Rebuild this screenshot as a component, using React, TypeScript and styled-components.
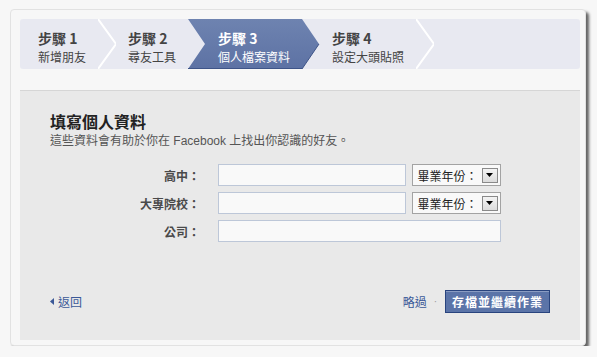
import { FC, Fragment } from 'react'
import styled, { createGlobalStyle } from 'styled-components'

const GlobalStyle = createGlobalStyle`
  html, body {
    margin: 0;
    padding: 0;
    background: #f7f7f7;
  }
  body {
    font-family: 'Liberation Sans', 'Noto Sans CJK TC', sans-serif;
    font-size: 12px;
    color: #333;
  }
`

const steps = [
  { n: 1, label: '新增朋友' },
  { n: 2, label: '尋友工具' },
  { n: 3, label: '個人檔案資料' },
  { n: 4, label: '設定大頭貼照' }
]
const ACTIVE = 3

const Card = styled.div`
  box-sizing: border-box;
  margin: 9px 0 0 10px;
  width: 576px;
  height: 337px;
  padding: 9px 5px 5px 9px;
  background: #f7f7f7;
  border: 1px solid #e2e2e2;
  border-radius: 4px;
  box-shadow: 3px 3px 3px rgba(0, 0, 0, 0.6);
  display: flex;
  flex-direction: column;
`

const StepBar = styled.div`
  display: flex;
  height: 50px;
  width: 560px;
  background: #e8e9f1;
  border-radius: 3px;
`

const Step = styled.div<{ $active?: boolean; $first?: boolean }>`
  box-sizing: border-box;
  display: flex;
  flex-direction: column;
  padding: 9px 12px 0 ${(p) => (p.$first ? 18 : 12)}px;
  color: ${(p) => (p.$active ? '#fff' : '#444')};
  background: ${(p) =>
    p.$active ? 'linear-gradient(#6e83b0, #5d72a4)' : 'transparent'};
  box-shadow: ${(p) => (p.$active ? 'inset 0 -1px 0 #3e5488' : 'none')};
  white-space: nowrap;
`

const StepTitle = styled.div`
  font-weight: bold;
  font-size: 14px;
  line-height: 20px;
  font-family: 'Noto Sans CJK TC', sans-serif;
`

const StepLabel = styled.div`
  font-size: 12px;
  line-height: 17px;
  font-family: 'Noto Sans CJK TC', sans-serif;
`

const Sep: FC<{ kind: 'plain' | 'into' | 'out'; id: string }> = ({ kind, id }) => (
  <svg width="18" height="50" viewBox="0 0 18 50" style={{ flex: 'none' }}>
    <defs>
      <linearGradient id={id} x1="0" y1="0" x2="0" y2="1">
        <stop offset="0" stopColor="#6e83b0" />
        <stop offset="1" stopColor="#5d72a4" />
      </linearGradient>
    </defs>
    {kind === 'plain' && (
      <polyline points="0,0 18,25 0,50" fill="none" stroke="#fff" strokeWidth="2" />
    )}
    {kind === 'into' && (
      <>
        <polygon points="0,0 18,0 18,50 0,50 17,25" fill={`url(#${id})`} />
        <line x1="0" y1="49.5" x2="18" y2="49.5" stroke="#3e5488" />
      </>
    )}
    {kind === 'out' && (
      <>
        <polygon points="0,0 17,25 0,50" fill={`url(#${id})`} />
        <polyline points="0,50 17,25" fill="none" stroke="#3e5488" />
      </>
    )}
  </svg>
)

const Panel = styled.div`
  box-sizing: border-box;
  margin-top: 21px;
  width: 560px;
  flex: 1;
  background: #e9e9e9;
  border-top: 1px solid #d6d6d6;
  padding: 18px 30px 27px 30px;
  display: flex;
  flex-direction: column;
`

const Heading = styled.h2`
  margin: 0;
  font-size: 16px;
  line-height: 24px;
  font-weight: bold;
  color: #222;
  font-family: 'Noto Sans CJK TC', sans-serif;
`

const Sub = styled.p`
  margin: 0;
  font-size: 12px;
  line-height: 17px;
  color: #555;
`

const Form = styled.div`
  margin-top: 14px;
  display: grid;
  grid-template-columns: 150px auto auto;
  column-gap: 18px;
  row-gap: 6px;
  align-items: center;
  justify-content: start;
`

const Label = styled.label`
  text-align: right;
  font-weight: bold;
  font-size: 12px;
  color: #4a4a4a;
  font-family: 'Noto Sans CJK TC', sans-serif;
`

const Input = styled.div<{ $wide?: boolean }>`
  box-sizing: border-box;
  height: 22px;
  width: ${(p) => (p.$wide ? 283 : 188)}px;
  background: #f9f9f9;
  border: 1px solid #bdc7d8;
  grid-column: ${(p) => (p.$wide ? '2 / span 2' : 'auto')};
`

const Select = styled.div`
  box-sizing: border-box;
  height: 22px;
  width: 89px;
  margin-left: -13px;
  background: #f9f9f9;
  border: 1px solid #a3a3a3;
  display: flex;
  align-items: center;
  justify-content: space-between;
  padding: 0 2px 0 5px;
  font-size: 12px;
  color: #222;
  font-family: 'Noto Sans CJK TC', sans-serif;
`

const DropBtn = styled.div`
  box-sizing: border-box;
  width: 16px;
  height: 15px;
  border: 1px solid #8a8a8a;
  background: linear-gradient(#f4f4f4, #dcdcdc);
  display: flex;
  align-items: center;
  justify-content: center;
`

const Footer = styled.div`
  margin-top: auto;
  display: flex;
  align-items: center;
  justify-content: space-between;
`

const Link = styled.a`
  color: #3b5998;
  font-size: 12px;
  text-decoration: none;
  font-family: 'Noto Sans CJK TC', sans-serif;
  display: flex;
  align-items: center;
  gap: 4px;
`

const Actions = styled.div`
  display: flex;
  align-items: center;
  gap: 7px;
`

const Dot = styled.span`
  color: #999;
  font-size: 10px;
  margin-right: 1px;
`

const Button = styled.button`
  box-sizing: border-box;
  height: 23px;
  width: 105px;
  background: #5b74a8;
  border: 1px solid #29447e;
  box-shadow: inset 0 1px 0 #8a9cc2;
  color: #fff;
  font-weight: bold;
  font-size: 12px;
  letter-spacing: 1px;
  font-family: 'Noto Sans CJK TC', serif;
  padding: 0;
`

const YearSelect: FC = () => (
  <Select>
    畢業年份：
    <DropBtn>
      <svg width="7" height="4" viewBox="0 0 7 4">
        <polygon points="0,0 7,0 3.5,4" fill="#000" />
      </svg>
    </DropBtn>
  </Select>
)

const App: FC = () => (
  <>
    <GlobalStyle />
    <Card>
      <StepBar>
        {steps.map((s, i) => {
          const active = s.n === ACTIVE
          const nextActive = s.n + 1 === ACTIVE
          return (
            <Fragment key={s.n}>
              <Step $active={active} $first={i === 0}>
                <StepTitle>步驟 {s.n}</StepTitle>
                <StepLabel>{s.label}</StepLabel>
              </Step>
              <Sep id={`sg${s.n}`} kind={active ? 'out' : nextActive ? 'into' : 'plain'} />
            </Fragment>
          )
        })}
      </StepBar>
      <Panel>
        <Heading>填寫個人資料</Heading>
        <Sub>這些資料會有助於你在 Facebook 上找出你認識的好友。</Sub>
        <Form>
          <Label>高中：</Label>
          <Input />
          <YearSelect />
          <Label>大專院校：</Label>
          <Input />
          <YearSelect />
          <Label>公司：</Label>
          <Input $wide />
        </Form>
        <Footer>
          <Link href="#">
            <svg width="4" height="7" viewBox="0 0 4 7">
              <polygon points="4,0 4,7 0,3.5" fill="#3b5998" />
            </svg>
            返回
          </Link>
          <Actions>
            <Link href="#">略過</Link>
            <Dot>·</Dot>
            <Button>存檔並繼續作業</Button>
          </Actions>
        </Footer>
      </Panel>
    </Card>
  </>
)

export default App
